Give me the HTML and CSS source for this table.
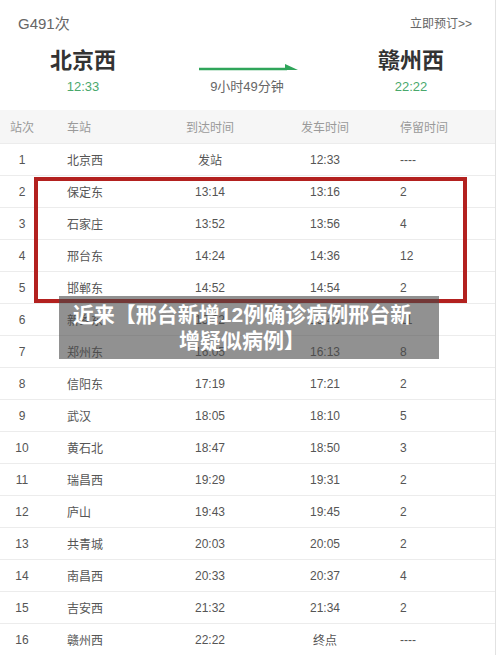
FILE: index.html
```html
<!DOCTYPE html>
<html lang="zh-CN">
<head>
<meta charset="UTF-8">
<meta name="viewport" content="width=device-width, initial-scale=1.0">
<title>G491次 时刻表</title>
<link rel="stylesheet" href="styles.css">
</head>
<body>
<div class="page">
  <div class="top">
    <span class="train-no">G491次</span>
    <a class="book" href="#">立即预订&gt;&gt;</a>
  </div>

  <div class="route">
    <div class="station">
      <div class="name">北京西</div>
      <div class="time">12:33</div>
    </div>
    <div class="trip">
      <svg class="arrow" width="100" height="8" viewBox="0 0 100 8">
        <line x1="0" y1="5" x2="88" y2="5" stroke="#2fa55a" stroke-width="2.4"/>
        <polygon points="86,0 99,6 86,6" fill="#2fa55a"/>
      </svg>
      <div class="duration">9小时49分钟</div>
    </div>
    <div class="station">
      <div class="name">赣州西</div>
      <div class="time">22:22</div>
    </div>
  </div>

  <div class="schedule">
    <table>
      <thead>
        <tr>
          <th class="c-no">站次</th>
          <th class="c-name">车站</th>
          <th class="c-arr">到达时间</th>
          <th class="c-dep">发车时间</th>
          <th class="c-stay">停留时间</th>
        </tr>
      </thead>
      <tbody>
        <tr><td class="c-no">1</td><td class="c-name">北京西</td><td class="c-arr">发站</td><td class="c-dep">12:33</td><td class="c-stay">----</td></tr>
        <tr><td class="c-no">2</td><td class="c-name">保定东</td><td class="c-arr">13:14</td><td class="c-dep">13:16</td><td class="c-stay">2</td></tr>
        <tr><td class="c-no">3</td><td class="c-name">石家庄</td><td class="c-arr">13:52</td><td class="c-dep">13:56</td><td class="c-stay">4</td></tr>
        <tr><td class="c-no">4</td><td class="c-name">邢台东</td><td class="c-arr">14:24</td><td class="c-dep">14:36</td><td class="c-stay">12</td></tr>
        <tr><td class="c-no">5</td><td class="c-name">邯郸东</td><td class="c-arr">14:52</td><td class="c-dep">14:54</td><td class="c-stay">2</td></tr>
        <tr><td class="c-no">6</td><td class="c-name">新乡东</td><td class="c-arr">15:32</td><td class="c-dep">15:43</td><td class="c-stay">11</td></tr>
        <tr><td class="c-no">7</td><td class="c-name">郑州东</td><td class="c-arr">16:05</td><td class="c-dep">16:13</td><td class="c-stay">8</td></tr>
        <tr><td class="c-no">8</td><td class="c-name">信阳东</td><td class="c-arr">17:19</td><td class="c-dep">17:21</td><td class="c-stay">2</td></tr>
        <tr><td class="c-no">9</td><td class="c-name">武汉</td><td class="c-arr">18:05</td><td class="c-dep">18:10</td><td class="c-stay">5</td></tr>
        <tr><td class="c-no">10</td><td class="c-name">黄石北</td><td class="c-arr">18:47</td><td class="c-dep">18:50</td><td class="c-stay">3</td></tr>
        <tr><td class="c-no">11</td><td class="c-name">瑞昌西</td><td class="c-arr">19:29</td><td class="c-dep">19:31</td><td class="c-stay">2</td></tr>
        <tr><td class="c-no">12</td><td class="c-name">庐山</td><td class="c-arr">19:43</td><td class="c-dep">19:45</td><td class="c-stay">2</td></tr>
        <tr><td class="c-no">13</td><td class="c-name">共青城</td><td class="c-arr">20:03</td><td class="c-dep">20:05</td><td class="c-stay">2</td></tr>
        <tr><td class="c-no">14</td><td class="c-name">南昌西</td><td class="c-arr">20:33</td><td class="c-dep">20:37</td><td class="c-stay">4</td></tr>
        <tr><td class="c-no">15</td><td class="c-name">吉安西</td><td class="c-arr">21:32</td><td class="c-dep">21:34</td><td class="c-stay">2</td></tr>
        <tr><td class="c-no">16</td><td class="c-name">赣州西</td><td class="c-arr">22:22</td><td class="c-dep">终点</td><td class="c-stay">----</td></tr>
      </tbody>
    </table>

    <!-- 红框标注 2~5 站 -->
    <div class="mark"></div>
    <div class="caption">近来【邢台新增12例确诊病例邢台新<br>增疑似病例】</div>
  </div>
</div>
</body>
</html>
```

FILE: styles.css
```css
body {
  margin: 0;
  background-color: #fff;
  font-family: "Liberation Sans", "Noto Sans CJK SC", sans-serif;
  color: #555;
}

.page {
  width: 495px;
  height: 655px;
  border-right: 1px solid #e2e2e2;
  overflow: hidden;
}

.top {
  display: flex;
  justify-content: space-between;
  align-items: center;
  padding: 12px 23px 0 18px;
  height: 20px;
}

.train-no {
  font-size: 15px;
  color: #666;
}

.book {
  font-size: 12px;
  color: #666;
  text-decoration: none;
}

.route {
  display: grid;
  grid-template-columns: 166px 162px 166px;
  height: 78px;
}

.station {
  text-align: center;
  padding-top: 16px;
}

.station .name {
  font-size: 22px;
  font-weight: bold;
  color: #333;
  line-height: 26px;
}

.station .time {
  font-size: 13px;
  color: #4aa86c;
  margin-top: 5px;
}

.trip {
  text-align: center;
  padding-top: 32px;
}

.arrow {
  display: block;
  margin: 0 auto 0 33px;
}

.duration {
  font-size: 13px;
  color: #666;
  margin-top: 4px;
}

.schedule {
  position: relative;
}

table {
  width: 495px;
  border-collapse: collapse;
  table-layout: fixed;
  font-size: 12px;
}

th,
td {
  padding: 0;
}

th {
  height: 33px;
  background-color: #f6f6f6;
  font-weight: normal;
  color: #9a9a9a;
  font-size: 12px;
}

td {
  height: 31px;
  border-top: 1px solid #ececec;
  color: #555;
}

.c-no {
  width: 44px;
  text-align: center;
}

.c-name {
  width: 93px;
  text-align: left;
  padding-left: 23px;
}

.c-arr {
  width: 100px;
  text-align: center;
}

.c-dep {
  width: 130px;
  text-align: center;
}

.c-stay {
  text-align: left;
  padding-left: 10px;
}

.mark {
  position: absolute;
  left: 34px;
  top: 67px;
  width: 425px;
  height: 118px;
  border: 4px solid #b3211f;
}

.caption {
  position: absolute;
  left: 59px;
  top: 186px;
  width: 366px;
  height: 63px;
  padding-right: 14px;
  background-color: rgba(72, 72, 72, 0.6);
  color: #fff;
  font-size: 21px;
  font-weight: bold;
  line-height: 26px;
  text-align: center;
  display: flex;
  align-items: center;
  justify-content: center;
}
```
